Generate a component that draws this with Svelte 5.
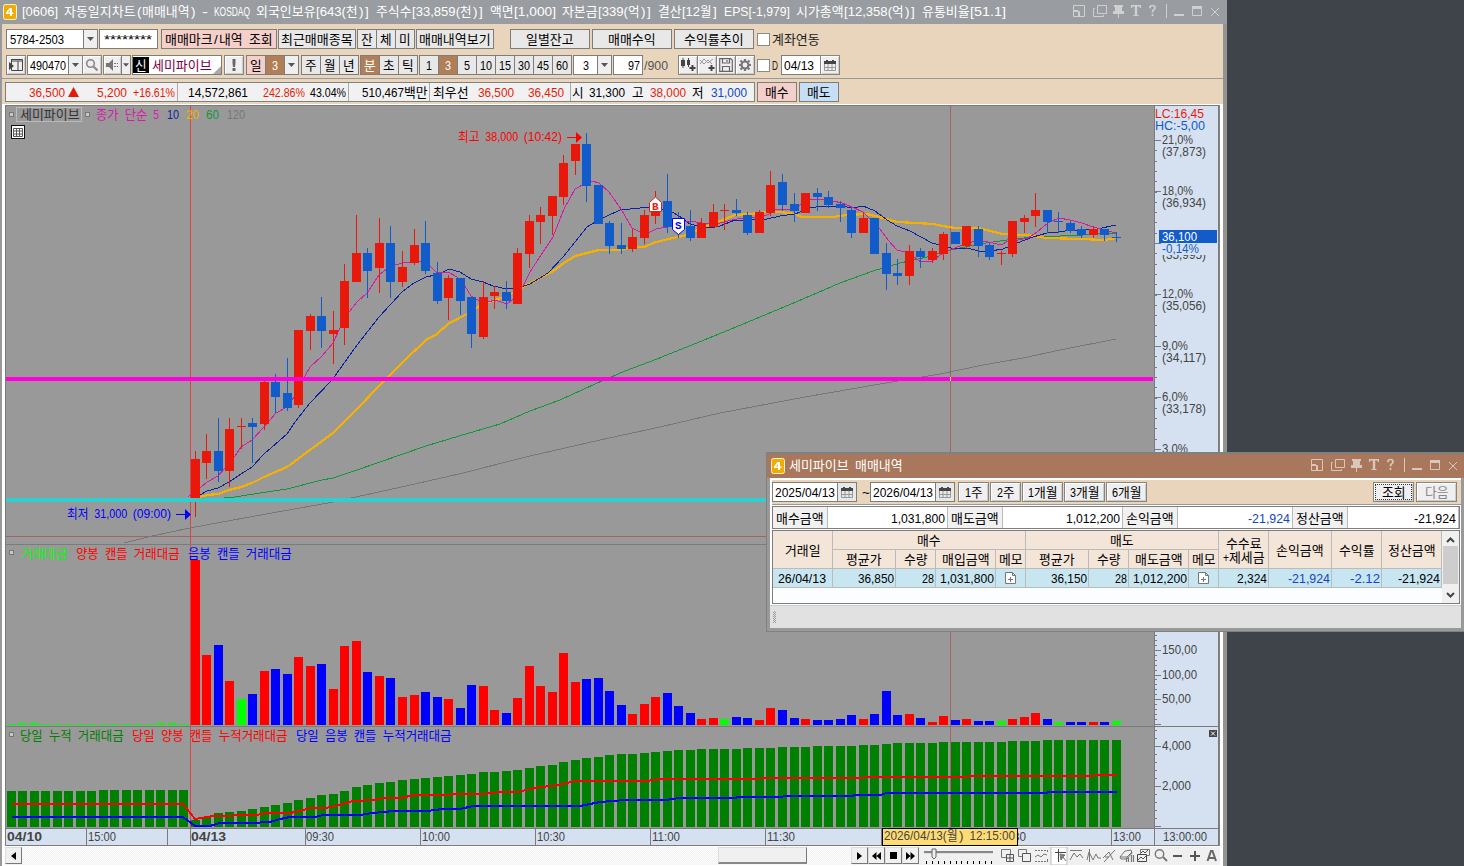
<script lang="ts">
  type Candle = [dir: string, top: number, bottom: number, high: number, low: number];

  const HANGUL = /[\u3131-\uD79D]/;

  // half-width cells for latin, full-width cells for hangul
  function cells(s: string) {
    return [...s].reduce((n, c) => n + (HANGUL.test(c) ? 2 : 1), 0);
  }

  // hangul, loose punctuation and latin words are fitted separately
  function runs(s: string, x: number, w?: number) {
    const unit = w ? w / cells(s) : 6;
    const out: { text: string; x: number | string; w?: number; latin: boolean }[] = [];
    let pos = 0;
    for (const part of s.match(/[\u3131-\uD79D]+|\s+|[^\s\u3131-\uD79D]+/g) ?? []) {
      const n = cells(part);
      const start = x + pos * unit;
      pos += n;
      if (!part.trim()) continue;
      if (HANGUL.test(part)) out.push({ text: part, x: start, w: n * unit - 0.4, latin: false });
      else if (/^[()[\]/~]+$/.test(part)) out.push({ text: part, x: [...part].map((_, i) => start + 1 + i * unit).join(' '), latin: true });
      else out.push({ text: part, x: start, w: n * unit, latin: true });
    }
    return out;
  }

  const barX = (i: number) => Math.floor(191.242 + 11.515 * i);

  const candles: Candle[] = [
    ['r', 459, 498, 451, 517], ['r', 451, 463, 434, 479], ['b', 451, 471, 418, 482], ['r', 429, 471, 418, 487],
    ['r', 426, 427, 418, 449], ['b', 423, 427, 418, 463], ['r', 382, 424, 381, 430], ['b', 382, 397, 374, 413],
    ['b', 393, 408, 358, 411], ['r', 330, 405, 330, 408], ['r', 316, 331, 314, 350], ['b', 316, 331, 297, 348],
    ['r', 330, 334, 311, 364], ['r', 281, 328, 264, 345], ['r', 253, 282, 215, 282], ['b', 253, 271, 248, 298],
    ['r', 243, 268, 218, 293], ['b', 243, 282, 226, 298], ['r', 267, 282, 251, 287], ['r', 245, 263, 229, 265],
    ['b', 243, 271, 221, 274], ['b', 273, 301, 262, 304], ['r', 278, 298, 275, 320], ['b', 278, 301, 278, 315],
    ['b', 297, 334, 297, 348], ['r', 297, 337, 281, 339], ['r', 292, 296, 286, 309], ['b', 292, 301, 281, 309],
    ['r', 253, 304, 248, 304], ['r', 221, 254, 215, 268], ['r', 215, 222, 207, 244], ['r', 196, 216, 196, 235],
    ['r', 163, 197, 155, 205], ['r', 144, 161, 144, 175], ['b', 144, 186, 133, 202], ['b', 185, 224, 185, 224],
    ['b', 223, 246, 221, 254], ['b', 245, 249, 223, 254], ['r', 237, 249, 229, 252], ['r', 215, 238, 210, 244],
    ['r', 205, 216, 191, 224], ['b', 201, 227, 174, 233], ['b', 226, 231, 212, 238], ['b', 226, 238, 210, 241],
    ['r', 223, 238, 218, 238], ['r', 212, 227, 204, 227], ['r', 210, 211, 204, 230], ['b', 210, 213, 199, 216],
    ['b', 215, 233, 212, 235], ['r', 212, 233, 210, 233], ['r', 185, 213, 171, 216], ['b', 182, 205, 174, 211],
    ['b', 204, 211, 193, 222], ['r', 193, 213, 193, 213], ['b', 193, 197, 188, 211], ['b', 197, 205, 191, 208],
    ['b', 204, 208, 201, 222], ['b', 210, 233, 207, 238], ['r', 218, 233, 212, 233], ['b', 218, 254, 218, 254],
    ['b', 253, 274, 243, 290], ['b', 273, 276, 259, 285], ['r', 251, 276, 245, 285], ['b', 251, 257, 248, 268],
    ['r', 251, 260, 248, 263], ['r', 234, 254, 232, 260], ['b', 232, 244, 232, 244], ['r', 226, 246, 226, 249],
    ['b', 229, 246, 226, 257], ['b', 245, 257, 243, 260], ['r', 253, 254, 251, 265], ['r', 221, 254, 221, 257],
    ['r', 218, 222, 215, 233], ['r', 210, 216, 193, 227], ['b', 210, 222, 210, 233], ['b', 221, 222, 212, 233],
    ['b', 223, 231, 221, 233], ['b', 229, 235, 226, 238], ['r', 229, 235, 226, 238], ['b', 229, 235, 229, 241],
    ['b', 237, 238, 232, 242],
  ];

  // trade value per bar: colour letter + top
  const volumes =
    'r560 r655 b645 r681 g699 b694 r671 b669 b674 r657 r666 b664 r689 r646 r641 b672 r676 b678 r697 r695 b692 b697 r699 b708 b685 r686 r710 b713 r698 r666 r686 r692 r653 r682 b679 b678 b691 b705 r714 r704 r697 b693 b706 b713 r719 r718 g719 b717 b718 r720 r708 b710 b718 r719 b720 b720 b719 b715 r719 b714 b691 b715 r714 b718 r722 r716 b720 r719 b721 b721 g721 r719 r717 r713 b719 g722 b722 b722 r722 b722 g721'
      .split(' ')
      .map((v) => ({ dir: v[0], top: +v.slice(1) }));

  const totals = [
    791, 791, 791, 791, 791, 791, 791, 791, 790, 790, 790, 790, 790, 790, 790, 790,
    820, 817, 813, 812, 811, 809, 807, 805, 803, 800, 798, 795, 794, 791, 787, 785, 783, 782, 780, 779,
    778, 777, 776, 775, 774, 772, 772, 771, 770, 768, 766, 765, 762, 760, 758, 757, 755, 754, 754, 753,
    752, 751, 750, 750, 749, 749, 749, 749, 748, 748, 748, 747, 747, 747, 746, 746, 746, 746, 745, 745,
    744, 743, 743, 743, 743, 742, 742, 742, 742, 742, 742, 741, 741, 741, 740, 740, 740, 740, 740, 740, 740,
  ];

  const ma5 =
    '188,497 200,488 207,482 218,476 225,468 235,456 241,447 252,440 264,427 276,413 287,407 294,397 305,376 310,367 322,356 333,343 340,328 349,312 357,302 367,293 379,275 387,269 395,265 403,263 410,262 421,261 430,266 437,273 448,272 457,277 465,286 471,296 478,300 488,302 495,300 507,304 513,299 523,286 530,272 541,255 553,237 564,209 575,189 586,183 592,181 599,183 609,192 621,209 632,228 640,232 650,232 656,229 667,227 678,223 690,221 702,223 713,224 720,223 732,220 743,218 755,217 767,215 777,209 790,209 800,205 810,200 817,199 828,200 833,201 842,203 852,207 863,212 869,218 880,229 888,240 897,250 909,253 921,262 932,261 943,253 955,248 967,243 972,242 983,241 993,243 1001,245 1008,241 1018,240 1028,238 1037,232 1048,223 1059,218 1070,220 1082,223 1093,227 1105,230 1116,233';
  const ma10 =
    '196,497 200,495 207,491 218,488 229,482 241,474 252,467 264,454 287,434 295,422 310,403 332,380 357,345 379,317 403,291 414,283 426,277 435,275 443,272 449,269 460,272 471,279 483,282 493,286 507,289 517,288 530,284 548,273 563,257 575,242 587,227 595,222 605,217 620,210 640,208 650,207 662,209 672,212 679,216 690,224 702,227 715,227 720,226 735,220 750,220 767,219 780,216 795,214 810,208 823,206 840,206 853,208 863,206 875,211 887,220 897,226 910,231 921,237 932,243 943,246 951,248 967,248 979,251 990,251 1003,249 1017,243 1033,237 1047,233 1058,232 1072,230 1083,230 1097,229 1116,225';
  const ma20 =
    '196,498 200,497 207,495 218,494 229,490 241,487 252,483 264,477 287,467 310,450 333,433 357,409 379,386 403,362 426,340 437,334 448,324 459,318 467,314 483,304 507,296 523,287 540,278 553,271 564,263 575,256 587,253 599,250 621,250 632,247 644,247 656,242 673,238 687,235 702,228 720,221 735,215 750,214 767,212 780,212 795,214 802,217 833,217 847,215 867,214 883,218 897,222 917,223 933,224 943,226 955,228 979,228 1002,234 1027,235 1047,238 1080,239 1105,240 1116,238';
  const ma60 =
    '224,498 235,497 260,493 287,489 322,480 333,478 357,470 426,446 459,436 500,424 530,411 560,400 595,384 625,371 657,359 719,334 760,317 803,299 840,283 873,271 900,263 927,257 951,250 979,244 1007,240 1033,237 1060,236 1083,235 1105,233 1116,234';
  const ma120 =
    '124,543 152,536 190,528 233,520 283,511 328,503 388,490 459,474 530,456 600,440 660,427 720,413 805,397 880,384 940,374 983,365 1023,358 1060,350 1116,339';
  const upTotal =
    '12,804 183,804 195,819 207,817 213,816 256,815 267,813 290,813 300,811 310,808 326,808 335,806 353,801 373,800 384,798 400,798 415,795 445,795 455,794 483,794 500,792 518,792 530,789 540,787 552,786 563,784 575,781 645,781 655,780 660,779 755,779 765,778 863,778 865,777 966,777 968,776 1093,776 1095,775 1117,775';
  const downTotal =
    '12,817 183,817 195,826 210,826 220,823 250,823 270,822 280,819 290,817 315,817 323,815 360,815 372,813 385,812 392,811 425,811 437,810 440,809 460,809 473,806 580,806 600,802 625,800 665,800 680,798 735,798 738,797 782,797 784,796 852,796 855,795 880,795 887,793 1047,793 1048,792 1117,792';

  const priceAxis = [
    { y: 140, pct: '21,0%', price: '(37,873)' },
    { y: 191, pct: '18,0%', price: '(36,934)' },
    { y: 243, pct: '', price: '(35,995)' },
    { y: 294, pct: '12,0%', price: '(35,056)' },
    { y: 346, pct: '9,0%', price: '(34,117)' },
    { y: 397, pct: '6,0%', price: '(33,178)' },
    { y: 449, pct: '3,0%', price: '' },
  ];
  const minorTicks = [
    ...Array.from({ length: 38 }, (_, i) => Math.round(140 + i * 10.3)),
    ...Array.from({ length: 30 }, (_, i) => Math.round(724 - i * 4.95)),
    ...Array.from({ length: 13 }, (_, i) => 826 - i * 8),
  ];
  const times = [
    { x: 88, t: '15:00' }, { x: 306, t: '09:30' }, { x: 422, t: '10:00' }, { x: 537, t: '10:30' },
    { x: 652, t: '11:00' }, { x: 767, t: '11:30' }, { x: 1113, t: '13:00' },
  ];
  const timeDividers = [86, 167, 190, 305, 420, 535, 650, 765, 881, 1111, 1154];

  const quote = [
    { t: '36,500', c: 'red', gap: 23 }, { t: '▲', c: 'red', gap: 3 }, { t: '5,200', c: 'red', gap: 18 },
    { t: '+16.61%', c: 'red', gap: 6 }, { t: '|', gap: 2 }, { t: '14,572,861', gap: 10 }, { t: '242.86%', c: 'red', gap: 15 },
    { t: '43.04%', gap: 5 }, { t: '|', gap: 2 }, { t: '510,467백만', gap: 13 }, { t: '|', gap: 1 }, { t: '최우선', gap: 3 },
    { t: '36,500', c: 'red', gap: 9 }, { t: '36,450', c: 'red', gap: 14 }, { t: '|', gap: 6 }, { t: '시', gap: 1 },
    { t: '31,300', gap: 5 }, { t: '고', gap: 7 }, { t: '38,000', c: 'red', gap: 6 }, { t: '저', gap: 6 },
    { t: '31,000', c: 'blue', gap: 7 },
  ];
  const minutes = ['1', '3', '5', '10', '15', '30', '45', '60'];

  const record = [
    { v: '26/04/13', c: 'center' }, { v: '36,850' }, { v: '28' }, { v: '1,031,800' }, { v: 'memo', c: 'center' },
    { v: '36,150' }, { v: '28' }, { v: '1,012,200' }, { v: 'memo', c: 'center' }, { v: '2,324' },
    { v: '-21,924', c: 'blue' }, { v: '-2.12', c: 'blue' }, { v: '-21,924' },
  ];
</script>

{#snippet spans(s: string, x: number, w?: number)}
  {#each runs(s, x, w) as r}<tspan x={r.x} textLength={r.w} lengthAdjust="spacingAndGlyphs" class:latin={r.latin}>{r.text}</tspan>{/each}
{/snippet}

{#snippet label(s: string, cls = '')}
  <svg class="label {cls}" width={cells(s) * 6} height="14">
    <text y="12">{@render spans(s, 0)}</text>
  </svg>
{/snippet}

{#snippet mark(s: string, x: number, y: number, w: number, cls: string)}
  <text {y} class={cls}>{@render spans(s, x, w)}</text>
{/snippet}

{#snippet arrow()}
  <svg width="7" height="4" viewBox="0 0 7 4"><path d="M0 0h7L3.5 4z" fill="#555" /></svg>
{/snippet}

{#snippet calendar()}
  <svg width="12" height="11" viewBox="0 0 12 11">
    <path d="M0 1h2V0h2v1h4V0h2v1h2v3H0z" fill="#444" />
    <path d="M.5 4v6.5h11V4M4 4v6M8 4v6M1 7.500h10" fill="none" stroke="#999" />
  </svg>
{/snippet}

{#snippet logo()}
  <svg width="14" height="16" viewBox="0 0 14 16">
    <rect x=".5" y=".5" width="13" height="15" rx="2" fill="#f0ac00" stroke="#fff3cf" />
    <path d="M6.500 4H9v4.500h1.500v1.500H9v2H7v-2H3V8.500zM7 6.200 5 8.500h2z" fill="#fff" fill-rule="evenodd" />
  </svg>
{/snippet}

{#snippet windowControls()}
  <svg class="controls" width="147" height="15" viewBox="0 0 147 15" fill="none" stroke="currentColor">
    <path d="M.500 1.500h11v11H.500zM1 7.500h5.500V12" /><path d="M1 6.500h4M5.500 7v5" />
    <path d="M24.500 1.500h9v8h-9zM22 4.500h-1.500v8h10V11" />
    <path d="M41 1h9v2h-1v4h2v3H40V7h2V3h-1zM45 10h1v4h-1z" fill="currentColor" stroke="none" />
    <path d="M58 1h10v3h-1l-.6-1.600H64.200V11h1.400v1h-5.200v-1h1.400V2.400h-2.200L59 4h-1z" fill="currentColor" stroke="none" />
    <path d="M77 4.200V3.500Q77 1.500 79.500 1.500T82 3.700q0 1.300-1.300 2T79.500 8.500M79.500 10v2" stroke-width="1.700" />
    <path d="M93.500 0v14" />
    <path d="M101 11h10" stroke-width="2" />
    <path d="M119.500 3.500h9v8h-9z" /><path d="M119 3.500h10" stroke-width="3" />
    <path d="m138 4 8 8M146 4l-8 8" />
  </svg>
{/snippet}

{#snippet memoIcon()}
  <svg width="11" height="12" viewBox="0 0 11 12" fill="#fff" stroke="#777">
    <path d="M.5.5h7l3 3v8H.5zM7.500.5v3h3M3 7.500h5M5.500 5v5" />
  </svg>
{/snippet}

<div class="desktop">
  <section class="main-window">
    <header class="titlebar">
      {@render logo()}
      {@render label('[0606] 자동일지차트(매매내역) - KOSDAQ 외국인보유[643(천)] 주식수[33,859(천)] 액면[1,000] 자본금[339(억)] 결산[12월] EPS[-1,979] 시가총액[12,358(억)] 유통비율[51.1]', 'title')}
      {@render windowControls()}
    </header>

    <div class="toolbars">
      <div class="toolbar">
        <div class="box account">{@render label('5784-2503')}</div>
        <button class="btn drop">{@render arrow()}</button>
        <div class="box password">{@render label('********')}</div>
        <button class="btn pink marks">{@render label('매매마크/내역 조회')}</button>
        <button class="btn recent">{@render label('최근매매종목')}</button>
        <div class="group tri">
          <button class="btn sq">{@render label('잔')}</button>
          <button class="btn sq">{@render label('체')}</button>
          <button class="btn sq">{@render label('미')}</button>
        </div>
        <button class="btn recent">{@render label('매매내역보기')}</button>
        <button class="btn report first">{@render label('일별잔고')}</button>
        <button class="btn report">{@render label('매매수익')}</button>
        <button class="btn report">{@render label('수익률추이')}</button>
        <span class="check"></span>
        {@render label('계좌연동', 'dark')}
      </div>

      <div class="toolbar second">
        <button class="btn sq raised">
          <svg width="14" height="14" viewBox="0 0 14 14"><path d="M2.500 1v11.500h11V1.500H2M2 3h11M9 3v9" fill="none" stroke="#444" /><path d="M0 4l5 4-5 4z" fill="#444" /></svg>
        </button>
        <div class="box code">{@render label('490470')}</div>
        <button class="btn drop">{@render arrow()}</button>
        <button class="btn sq raised search">
          <svg width="14" height="14" viewBox="0 0 14 14" fill="none" stroke="#888"><circle cx="5.500" cy="5.500" r="3.800" stroke-width="1.600" /><path d="m8.500 8.500 4 4" stroke-width="2.200" /></svg>
        </button>
        <button class="btn sq raised speaker">
          <svg width="14" height="12" viewBox="0 0 14 12"><path d="M0 4h3l4-4v12L3 8H0z" fill="#777" /><path d="M8 4h2v1H8zM11 4h1v1h-1zM8 7h2v1H8zM11 7h1v1h-1z" fill="#777" /></svg>
        </button>
        <button class="btn drop small">{@render arrow()}</button>
        <div class="box stock"><b>{@render label('신')}</b>{@render label('세미파이브')}<i></i></div>
        <button class="btn sq raised bang"><svg width="4" height="12" viewBox="0 0 4 12"><path d="M.5 0h3v4L3 8H1L.5 4zM.500 9h3v3h-3z" fill="#666" /></svg></button>
        <div class="group day">
          <button class="btn sq pink">{@render label('일')}</button>
          <button class="btn sq on">{@render label('3')}</button>
          <button class="btn drop">{@render arrow()}</button>
        </div>
        <div class="group term">
          <button class="btn sq">{@render label('주')}</button>
          <button class="btn sq">{@render label('월')}</button>
          <button class="btn sq">{@render label('년')}</button>
        </div>
        <div class="group">
          <button class="btn sq on">{@render label('분')}</button>
          <button class="btn sq">{@render label('초')}</button>
          <button class="btn sq">{@render label('틱')}</button>
        </div>
        <div class="group mins">
          {#each minutes as m}
            <button class="btn sq" class:on={m === '3'}>{@render label(m)}</button>
          {/each}
        </div>
        <div class="box tick">{@render label('3')}</div>
        <button class="btn drop">{@render arrow()}</button>
        <div class="box count">{@render label('97')}</div>
        {@render label('/900', 'muted')}
        <div class="group tools">
          <button class="btn sq raised">
            <svg width="16" height="14" viewBox="0 0 16 14"><path d="M1 2h4v6H1zM2.500 0h1v10h-1zM7 2h3v5H7zM8 0h1v9H8z" fill="#444" /><path d="M12.500 7v6M9.500 10h6" stroke="#444" stroke-width="2" /></svg>
          </button>
          <button class="btn sq raised">
            <svg width="16" height="14" viewBox="0 0 16 14" fill="none" stroke="#999"><path d="m1 6 4-5 4 4 5-4M1 2l4 4 4-4 4 4" /><path d="M12.500 7v6M9.500 10h6" stroke="#444" stroke-width="2" /></svg>
          </button>
          <button class="btn sq raised">
            <svg width="14" height="14" viewBox="0 0 14 14" fill="none" stroke="#666" stroke-width="1.200"><path d="M.700.700h11l1.600 1.600v11H.700zM3.500 1v4h7V1M3.500 13V8.500h7V13M8 2v2" /></svg>
          </button>
          <button class="btn sq raised">
            <svg width="14" height="14" viewBox="0 0 14 14" fill="none" stroke="#777"><circle cx="7" cy="7" r="3.500" stroke-width="2.200" /><path d="M7 1v2M7 11v2M1 7h2M11 7h2M2.500 2.500 4 4M10 10l1.500 1.500M11.500 2.500 10 4M2.500 11.500 4 10" stroke-width="2.200" /></svg>
          </button>
        </div>
        <span class="check"></span>
        {@render label('D', 'dark')}
        <div class="box date">{@render label('04/13')}</div>
        <button class="btn sq raised cal">{@render calendar()}</button>
      </div>

      <div class="toolbar quote-row">
        <div class="quote">
          {#each quote as q}
            <span class={q.t === '|' ? 'sep' : (q.c ?? '')} style:margin-left="{q.gap}px">
              {#if q.t === '▲'}
                <svg width="11" height="10" viewBox="0 0 11 10"><path d="M5.500 0 11 10H0z" fill="currentColor" /></svg>
              {:else if q.t !== '|'}
                {@render label(q.t)}
              {/if}
            </span>
          {/each}
        </div>
        <button class="btn pink order">{@render label('매수')}</button>
        <button class="btn sky order">{@render label('매도')}</button>
      </div>
    </div>

    <svg class="chart" width="1215" height="742" viewBox="5 105 1215 742">
      <g shape-rendering="crispEdges">
        <rect x="5" y="105" width="1215" height="742" fill="#7b7b7b" />
        <rect x="6" y="106" width="1148" height="722" fill="#999" />
        <rect x="1155" y="106" width="63" height="722" fill="#d5e1f0" />
        <rect x="6" y="829" width="1212" height="16" fill="#d5e1f0" />
        <rect x="1219" y="105" width="1" height="742" fill="#808080" />
        <rect x="5" y="846" width="1215" height="1" fill="#fff" />

        <rect x="190" y="106" width="1" height="723" fill="#dc4343" />
        <rect x="6" y="536" width="1148" height="1" fill="#a06464" />
        <rect x="950" y="106" width="1" height="722" fill="#a06464" />

        {#each totals as top, i}
          <rect x={barX(i - 16)} y={top} width="9" height={827 - top} fill="#008000" />
        {/each}
        {#each { length: 16 } as _, i}
          <rect x={barX(i - 16)} y={[1, 2, 13, 14].includes(i) ? 723 : 724} width="9" height={[1, 2, 13, 14].includes(i) ? 2 : 1} fill="#0f0" />
        {/each}
        {#each volumes as v, i}
          <rect x={barX(i)} y={v.top} width="9" height={725 - v.top} class="vol-{v.dir}" />
        {/each}
        <rect x="950" y="640" width="1" height="188" fill="#a06464" opacity=".7" />

        <polyline points={ma120} class="line" stroke="#777" />
        <polyline points={ma60} class="line" stroke="#12963c" />
        <polyline points={ma20} class="line" stroke="#f5b000" stroke-width="2.200" />
        <polyline points={ma10} class="line" stroke="#0c22a0" />
        <polyline points={ma5} class="line" stroke="#d818a8" />

        {#each candles as [dir, top, bottom, high, low], i}
          <rect x={barX(i) + 4} y={high} width="1" height={low - high} class="candle-{dir}" />
          <rect x={barX(i)} y={top} width="9" height={bottom - top} class="candle-{dir}" />
        {/each}

        <rect x="6" y="377" width="1147" height="4" fill="#ff00dc" />
        <rect x="950" y="377" width="1" height="4" fill="#ff0" />
        <rect x="6" y="498" width="1147" height="4" fill="#30cfcf" />

        <polyline points={upTotal} class="line" stroke="#f00" stroke-width="2" />
        <polyline points={downTotal} class="line" stroke="#00f" stroke-width="2" />

        <path d="M6 544.500h1213M6 726.500h1213M6 828.500h1213M1154.500 106v740" stroke="#7b7b7b" fill="none" />
        {#each minorTicks as y}
          <rect x="1155" {y} width="2" height="1" fill="#7b7b7b" />
        {/each}
        {#each [140, 191, 243, 294, 346, 397, 449, 650, 675, 699, 724, 746, 786, 826] as y}
          <rect x="1155" {y} width="6" height="1" fill="#7b7b7b" />
        {/each}
        {#each timeDividers as x}
          <rect {x} y="829" width="1" height="17" fill="#7b7b7b" />
        {/each}
      </g>

      <!-- pane legends -->
      <rect x="16.500" y="107.500" width="65" height="14" fill="#999" stroke="#bbb" />
      {#each [[9.5, 112.5], [85.5, 112.5], [9.5, 550.5], [9.5, 732.5]] as [x, y]}
        <rect {x} {y} width="4" height="4" fill="#c8c8c8" stroke="#777" />
      {/each}
      {@render mark('세미파이브', 20, 119, 60, 't-dark')}
      {@render mark('종가 단순 5', 96, 119, 63, 't-pink')}
      {@render mark('10', 167, 119, 12, 't-navy')}
      {@render mark('20', 186, 119, 13, 't-gold')}
      {@render mark('60', 206, 119, 13, 't-green')}
      {@render mark('120', 227, 119, 18, 't-gray')}
      <g fill="#fff" stroke="#111">
        <rect x="11.500" y="125.500" width="13" height="13" />
        <path d="M13.500 128.500h9v8h-9zM13.500 131h9M13.500 134h9M16.500 128v8M19.500 128v8" stroke="#555" />
      </g>
      {@render mark('거래대금', 21, 558, 47, 't-lime')}
      {@render mark('양봉 캔들 거래대금', 76, 558, 104, 't-red')}
      {@render mark('음봉 캔들 거래대금', 188, 558, 104, 't-blue')}
      {@render mark('당일 누적 거래대금', 20, 740, 104, 't-forest')}
      {@render mark('당일 양봉 캔들 누적거래대금', 132, 740, 156, 't-red')}
      {@render mark('당일 음봉 캔들 누적거래대금', 296, 740, 156, 't-blue')}

      <!-- high / low callouts -->
      {@render mark('최고 38,000 (10:42)', 458, 141, 104, 't-red')}
      <path d="M567 137.500h10" stroke="#f00" /><path d="M576 132l6 5.500-6 5.500z" fill="#f00" />
      {@render mark('최저 31,000 (09:00)', 67, 518, 104, 't-blue')}
      <path d="M176 514.500h10" stroke="#00f" /><path d="M185 509l6 5.500-6 5.500z" fill="#00f" />

      <!-- buy / sell markers -->
      <path d="M649.500 202.500 655.500 197l6 5.500v9h-12z" fill="#fff" stroke="#d02020" />
      <text x="652" y="210" class="tag buy">B</text>
      <path d="M672.500 218.500h12v11l-6 5-6-5z" fill="#fff" stroke="#00f" />
      <text x="675" y="229" class="tag sell">S</text>

      <!-- price scale -->
      {@render mark('LC:16,45', 1155, 118, 49, 't-candle')}
      {@render mark('HC:-5,00', 1155, 130, 50, 't-axisblue')}
      {#each priceAxis as p}
        {#if p.pct}{@render mark(p.pct, 1162, p.y + 4, p.pct.length > 4 ? 31 : 26, 't-axis')}{/if}
        {#if p.price}{@render mark(p.price, 1162, p.y + 16, 44, 't-axis')}{/if}
      {/each}
      <rect x="1162" y="243" width="54" height="12" fill="#d5e1f0" />
      <rect x="1159" y="230" width="58" height="13" fill="#115bcb" />
      {@render mark('36,100', 1162, 241, 35, 't-white')}
      {@render mark('-0,14%', 1162, 253, 37, 't-axisblue')}
      {@render mark('150,00', 1162, 654, 35, 't-axis')}
      {@render mark('100,00', 1162, 679, 35, 't-axis')}
      {@render mark('50,00', 1162, 703, 29, 't-axis')}
      {@render mark('4,000', 1162, 750, 29, 't-axis')}
      {@render mark('2,000', 1162, 790, 29, 't-axis')}
      <rect x="1209" y="730" width="8" height="7" fill="#444" />
      <path d="m1211 731.500 4 4M1215 731.500l-4 4" stroke="#fff" />

      <!-- time scale -->
      {@render mark('04/10', 7, 841, 35, 't-bold')}
      {@render mark('04/13', 191, 841, 35, 't-bold')}
      {#each times as t}
        {@render mark(t.t, t.x, 841, 28, 't-axis')}
      {/each}
      {@render mark('30', 1013, 841, 13, 't-axis')}
      {@render mark('13:00:00', 1163, 841, 44, 't-axis')}
      <rect x="882.500" y="828.500" width="135" height="17" fill="#ffdc73" stroke="#000" />
      {@render mark('2026/04/13(월) 12:15:00', 884, 840, 131, 't-axis')}
    </svg>

    <footer class="scrollrow">
      <button class="cell"><svg width="5" height="8" viewBox="0 0 5 8"><path d="M5 0v8L0 4z" /></svg></button>
      <div class="track"><div class="thumb"></div></div>
      <button class="cell"><svg width="5" height="8" viewBox="0 0 5 8"><path d="M0 0v8l5-4z" /></svg></button>
      <button class="cell"><svg width="9" height="8" viewBox="0 0 9 8"><path d="M4.500 0v8L0 4zM9 0v8L4.500 4z" /></svg></button>
      <button class="cell"><svg width="7" height="7"><rect width="7" height="7" /></svg></button>
      <button class="cell"><svg width="9" height="8" viewBox="0 0 9 8"><path d="M0 0v8l4.500-4zM4.500 0v8L9 4z" /></svg></button>
      <svg class="slider" width="78" height="18" viewBox="919 847 78 18">
        <path d="M924 852h69" stroke="#888" stroke-width="2" /><path d="M924 853.500h69" stroke="#ddd" />
        <path d="M932 849h4v8l-2 2-2-2z" fill="#eee" stroke="#666" />
        {#each { length: 12 } as _, i}<rect x={926 + Math.round(i * 5.9)} y="861" width="1" height="3" />{/each}
      </svg>
      <svg class="chart-tools" width="223" height="18" viewBox="997 847 223 18" fill="none" stroke="#777">
        <rect x="1051" y="847" width="16" height="18" fill="#fff" stroke="#bbb" />
        <path d="M1001.500 849.500h9v8h-9z" /><path d="M1006.500 854.500h7v7h-7zM1010 855v6M1007 858h6" fill="#f0f0f0" stroke="#555" />
        <path d="M1018.500 849.500h8v7h-8z" /><path d="M1022.500 853.500h8v8h-8z" fill="#f0f0f0" stroke="#555" />
        <path d="M1035 850.500h13M1035 861.500h13M1047.500 850v3M1047.500 859v3" stroke-dasharray="2 1" /><path d="m1035 857 3-2 3 2 3-3 3 1" />
        <path d="M1055 852.500h11M1058.500 849v13" stroke="#444" /><path d="m1060 854 5 1-2 2 3 4M1060 854l1 6 2-3" fill="#777" />
        <path d="M1070 850.500h12M1070 860l4-7 3 4 3-3 3 4" />
        <path d="m1087 860 2-8 4 8 3-6 2 4h3M1089.500 849v13" />
        <path d="m1103 858 6-6 4 8M1104 862l11-12M1105 857h4" />
        <path d="m1120 857 5-6 6-1 1 3-5 6h-6zM1120 857h7l5-5" /><path d="M1126.500 862v-4h2v4M1131.500 855v7M1133.500 855v7" stroke-width="1.200" />
        <path d="M1140.500 849.500h9v6h-9z" /><path d="M1137.500 854.500h9v7h-9z" fill="#f0f0f0" stroke="#444" /><path d="m1138 860 3-3 2 2 3-3M1141 853l2-2 2 2 3-3" stroke="#555" />
        <circle cx="1159.500" cy="854" r="4.200" stroke-width="1.400" /><path d="m1163 857 4 4" stroke-width="2" />
        <path d="M1173 856h9M1190 856h10M1195 851v10" stroke-width="2" stroke="#555" />
        <path d="m1207.500 861 3.500-10h1.500l3.500 10M1209 858h6" stroke-width="2" stroke="#666" />
      </svg>
    </footer>
  </section>

  <section class="popup">
    <header class="titlebar">
      {@render logo()}
      {@render label('세미파이브 매매내역', 'title')}
      {@render windowControls()}
    </header>
    <div class="popup-body">
      <div class="filters">
        <div class="box period">{@render label('2025/04/13')}</div>
        <button class="btn sq cal">{@render calendar()}</button>
        <span class="tilde">{@render label('~')}</span>
        <div class="box period">{@render label('2026/04/13')}</div>
        <button class="btn sq cal">{@render calendar()}</button>
        <div class="ranges">
          <button class="btn raised">{@render label('1주')}</button>
          <button class="btn raised">{@render label('2주')}</button>
          <button class="btn raised wide">{@render label('1개월')}</button>
          <button class="btn raised wide">{@render label('3개월')}</button>
          <button class="btn raised wide">{@render label('6개월')}</button>
        </div>
        <button class="btn raised action focus">{@render label('조회')}</button>
        <button class="btn raised action off">{@render label('다음')}</button>
      </div>

      <div class="summary">
        <span class="key">{@render label('매수금액')}</span><span class="val">{@render label('1,031,800')}</span>
        <span class="key">{@render label('매도금액')}</span><span class="val">{@render label('1,012,200')}</span>
        <span class="key">{@render label('손익금액')}</span><span class="val blue">{@render label('-21,924')}</span>
        <span class="key">{@render label('정산금액')}</span><span class="val">{@render label('-21,924')}</span>
      </div>

      <div class="trades">
        <div class="grid">
          <div class="th tall">{@render label('거래일')}</div>
          <div class="th span4">{@render label('매수')}</div>
          <div class="th span4">{@render label('매도')}</div>
          <div class="th tall stack">{@render label('수수료')}{@render label('+제세금')}</div>
          <div class="th tall">{@render label('손익금액')}</div>
          <div class="th tall">{@render label('수익률')}</div>
          <div class="th tall">{@render label('정산금액')}</div>
          {#each ['평균가', '수량', '매입금액', '메모', '평균가', '수량', '매도금액', '메모'] as h}
            <div class="th">{@render label(h)}</div>
          {/each}
          {#each record as r}
            <div class="td {r.c ?? ''}">
              {#if r.v === 'memo'}{@render memoIcon()}{:else}{@render label(r.v)}{/if}
            </div>
          {/each}
        </div>
        <div class="vscroll">
          <svg width="9" height="6" viewBox="0 0 9 6"><path d="m1 5 3.500-3.500L8 5" fill="none" stroke="#444" stroke-width="2" /></svg>
          <i></i>
          <svg width="9" height="6" viewBox="0 0 9 6"><path d="m1 1 3.500 3.500L8 1" fill="none" stroke="#444" stroke-width="2" /></svg>
        </div>
      </div>
      <div class="status"><i></i></div>
    </div>
  </section>
</div>

<style>
  :global(body) {
    background: #3f434a;
    overflow: hidden;
  }
  .desktop {
    position: relative;
    width: 1464px;
    height: 866px;
    overflow: hidden;
    font-family: 'Liberation Sans', 'Noto Sans CJK KR', sans-serif;
    font-size: 13px;
    color: #000;
  }
  svg {
    display: block;
    flex-shrink: 0;
  }
  text {
    font-family: 'Liberation Sans', 'Noto Sans CJK KR', sans-serif;
    font-size: 13px;
    fill: currentColor;
  }
  .latin {
    font-size: 13.5px;
  }
  .label {
    overflow: visible;
  }
  button {
    font: inherit;
    color: inherit;
    margin: 0;
    padding: 0;
  }

  .main-window {
    box-sizing: border-box;
    width: 1227px;
    height: 866px;
    background: #fff;
    border-left: 2px solid #999;
    border-right: 4px solid #93938f;
  }
  .titlebar {
    display: flex;
    align-items: center;
    height: 24px;
    margin: 0 -4px 0 -2px;
    padding: 0 7px 0 3px;
    background: #999ca1;
    color: #fff;
  }
  .titlebar :global(.title) {
    margin: 0 auto 2px 5px;
  }
  .controls {
    color: #d0d0d0;
    margin-bottom: 1px;
  }

  .toolbars {
    height: 80px;
    background: #e8d5bc;
    border-bottom: 1px solid #fff;
  }
  .toolbar {
    display: flex;
    align-items: center;
    height: 20px;
    padding: 5px 0 0 4px;
  }
  .toolbar.second {
    padding-top: 6px;
    padding-bottom: 3px;
  }
  .box,
  .btn {
    box-sizing: border-box;
    display: flex;
    align-items: center;
    height: 20px;
    border: 1px solid #7d7d7d;
    flex-shrink: 0;
  }
  .box {
    background: #fff;
    padding: 0 2px;
  }
  .btn {
    justify-content: center;
    background: #e8e8e8;
    border-radius: 0;
  }
  .raised {
    background: #efefef;
    border-color: #858585;
    box-shadow: inset 1px 1px #fff, inset -1px -1px #ccc;
  }
  .sq {
    width: 20px;
  }
  .drop {
    width: 15px;
    margin-left: -1px;
    background: #efefef;
  }
  .pink {
    background: #f5cfca;
  }
  .sky {
    background: #c7dff5;
  }
  .on {
    background: #b07f57;
    color: #fff;
  }
  .group {
    display: flex;
  }
  .group .btn + .btn {
    margin-left: -1px;
  }
  .account {
    width: 78px;
    padding-left: 3px;
  }
  .password {
    width: 59px;
    margin-left: 1px;
    padding-left: 4px;
  }
  .marks {
    width: 116px;
    margin-left: 3px;
  }
  .recent {
    width: 78px;
    margin-left: 1px;
  }
  .tri {
    margin-left: 1px;
  }
  .report {
    width: 80px;
    margin-left: 2px;
  }
  .report.first {
    margin-left: 16px;
  }
  .check {
    width: 11px;
    height: 11px;
    margin: 0 2px 0 3px;
    border: 1px solid #8a8a8a;
    background: #fff;
  }
  .second .check {
    margin-left: 2px;
  }
  .toolbar :global(.dark) {
    color: #222;
  }
  .toolbar :global(.muted) {
    color: #555;
  }

  .code {
    width: 42px;
    margin-left: 1px;
  }
  .search {
    margin-left: -1px;
  }
  .speaker {
    width: 19px;
    margin-left: 1px;
  }
  .drop.small {
    width: 10px;
  }
  .drop.small svg {
    width: 6px;
  }
  .stock {
    position: relative;
    width: 90px;
    margin-left: 1px;
    padding: 0;
    color: #7a0045;
  }
  .stock b {
    display: flex;
    padding: 1px 2px;
    margin-right: 3px;
    background: #000;
    color: #fff;
    font-weight: normal;
  }
  .stock i {
    position: absolute;
    right: 0;
    bottom: 0;
    border: 4px solid #aaa;
    border-left-color: transparent;
    border-top-color: transparent;
  }
  .bang {
    margin-left: 2px;
  }
  .day {
    margin-left: 2px;
  }
  .term {
    margin: 0 1px 0 2px;
  }
  .mins {
    margin: 0 1px;
  }
  .tick {
    width: 25px;
    justify-content: center;
  }
  .count {
    width: 30px;
    margin: 0 1px;
    justify-content: flex-end;
  }
  .tools {
    margin-left: 10px;
  }
  .date {
    width: 40px;
    margin-left: 3px;
  }
  .cal {
    margin-left: -1px;
  }

  .quote-row {
    height: 20px;
    padding: 3px 0 0 3px;
    border-top: 1px solid #999;
  }
  .quote {
    box-sizing: border-box;
    display: flex;
    align-items: center;
    width: 750px;
    height: 20px;
    border: 1px solid #808080;
    background: #f1f1f1;
  }
  .quote .sep {
    width: 1px;
    height: 18px;
    background: #aaa;
  }
  .red {
    color: #e51a0a;
  }
  .blue {
    color: #1245c8;
  }
  .order {
    width: 40px;
    margin-left: 2px;
  }

  .chart {
    margin-left: 3px;
  }
  .line {
    fill: none;
  }
  .vol-r {
    fill: #f00;
  }
  .vol-b {
    fill: #00f;
  }
  .vol-g {
    fill: #0f0;
  }
  .candle-r {
    fill: #e8190a;
  }
  .candle-b {
    fill: #115bcb;
  }
  .t-dark {
    fill: #333;
  }
  .t-pink {
    fill: #d818a8;
  }
  .t-navy {
    fill: #0c22a0;
  }
  .t-gold {
    fill: #f5b000;
  }
  .t-green {
    fill: #12963c;
  }
  .t-gray {
    fill: #777;
  }
  .t-lime {
    fill: #0f0;
  }
  .t-red {
    fill: #f00;
  }
  .t-blue {
    fill: #00f;
  }
  .t-forest {
    fill: #008000;
  }
  .t-candle {
    fill: #e8190a;
  }
  .t-axisblue {
    fill: #115bcb;
  }
  .t-axis {
    fill: #444;
  }
  .t-white {
    fill: #fff;
  }
  .t-bold {
    fill: #444;
    font-weight: bold;
  }
  .tag {
    font-family: 'Liberation Mono', monospace;
    font-size: 11px;
    font-weight: bold;
  }
  .tag.buy {
    fill: #e02010;
  }
  .tag.sell {
    fill: #00f;
  }

  .scrollrow {
    display: flex;
    height: 18px;
    margin-left: 3px;
    background: #f0f0f0;
    width: 1215px;
  }
  .cell {
    box-sizing: border-box;
    display: flex;
    align-items: center;
    justify-content: center;
    width: 17px;
    height: 17px;
    border: 1px solid #888;
    border-color: #ddd #777 #777 #ddd;
    background: #f0f0f0;
    flex-shrink: 0;
  }
  .track {
    width: 829px;
    background: repeating-conic-gradient(#fff 0 25%, #f0f0f0 0 50%) 0 0 / 2px 2px;
  }
  .thumb {
    box-sizing: border-box;
    width: 89px;
    height: 17px;
    margin-left: 696px;
    border: 1px solid #ddd;
    border-right-color: #777;
    border-bottom: 2px solid #888;
    background: #f0f0f0;
  }

  .popup {
    position: absolute;
    left: 766px;
    top: 452px;
    box-sizing: border-box;
    width: 698px;
    height: 180px;
    padding: 0 3px;
    border: 1px solid #808080;
    border-top-width: 2px;
    border-right: 0;
    background: #999;
  }
  .popup .titlebar {
    margin: 0 -3px;
    padding: 0 6px 0 4px;
    background: #a9775b;
  }
  .popup .titlebar :global(.title) {
    margin-left: 4px;
  }
  .popup .controls {
    color: #dcc6ba;
  }
  .popup-body {
    height: 150px;
    overflow: hidden;
    background: #fff;
  }
  .filters {
    display: flex;
    align-items: center;
    height: 24px;
    margin: 2px 0 1px 2px;
    padding-right: 4px;
    background: #e8d5bc;
    border-bottom: 1px solid #999;
  }
  .period {
    width: 66px;
    padding: 0 2px;
  }
  .tilde {
    width: 6px;
    margin: 0 3px 0 4px;
  }
  .ranges {
    display: flex;
    gap: 1px;
    margin: 0 auto 0 3px;
  }
  .ranges .btn {
    width: 31px;
  }
  .ranges .wide {
    width: 41px;
  }
  .action {
    width: 41px;
    margin-left: 2px;
  }
  .focus {
    outline: 1px dotted #333;
    outline-offset: -3px;
  }
  .off {
    color: #888;
  }

  .summary {
    box-sizing: border-box;
    display: grid;
    grid-template-columns: 55px 120px 55px 120px 55px 115px 55px 1fr;
    width: 688px;
    height: 23px;
    margin-left: 2px;
    border: 1px solid #7d7d7d;
  }
  .summary span {
    display: flex;
    align-items: center;
    border-right: 1px solid #bbb;
  }
  .summary .key {
    justify-content: center;
    background: #f1f1f1;
  }
  .summary .val {
    justify-content: flex-end;
    padding-right: 2px;
  }

  .trades {
    box-sizing: border-box;
    display: flex;
    width: 688px;
    height: 74px;
    margin: 1px 0 1px 2px;
    border: 1px solid #7d7d7d;
    background: #fcfdff;
  }
  .grid {
    display: grid;
    grid-template-columns: 60px 63px 40px 60px 30px 63px 40px 60px 30px 50px 63px 50px 60px;
    grid-auto-rows: 19px;
    height: 57px;
  }
  .th,
  .td {
    display: flex;
    align-items: center;
    justify-content: center;
    border-right: 1px solid #bbb;
    border-bottom: 1px solid #bbb;
    background: #f4e5d9;
  }
  .tall {
    grid-row: span 2;
  }
  .span4 {
    grid-column: span 4;
  }
  .stack {
    flex-direction: column;
  }
  .td {
    justify-content: flex-end;
    padding-right: 1px;
    background: #c8e6f1;
  }
  .td.center {
    justify-content: center;
  }
  .vscroll {
    display: flex;
    flex-direction: column;
    align-items: center;
    justify-content: space-between;
    width: 17px;
    padding: 6px 0 5px;
    box-sizing: border-box;
    background: #f0f0f0;
  }
  .vscroll i {
    width: 15px;
    height: 38px;
    margin-bottom: 6px;
    background: #cdcdcd;
  }
  .status {
    height: 23px;
    padding: 5px 0 0 3px;
    background: #e1e1e1;
    border-top: 1px solid #ccc;
  }
  .status i {
    display: block;
    width: 3px;
    height: 12px;
    background: repeating-conic-gradient(#999 0 25%, #e1e1e1 0 50%) 0 0 / 2px 2px;
  }
</style>
